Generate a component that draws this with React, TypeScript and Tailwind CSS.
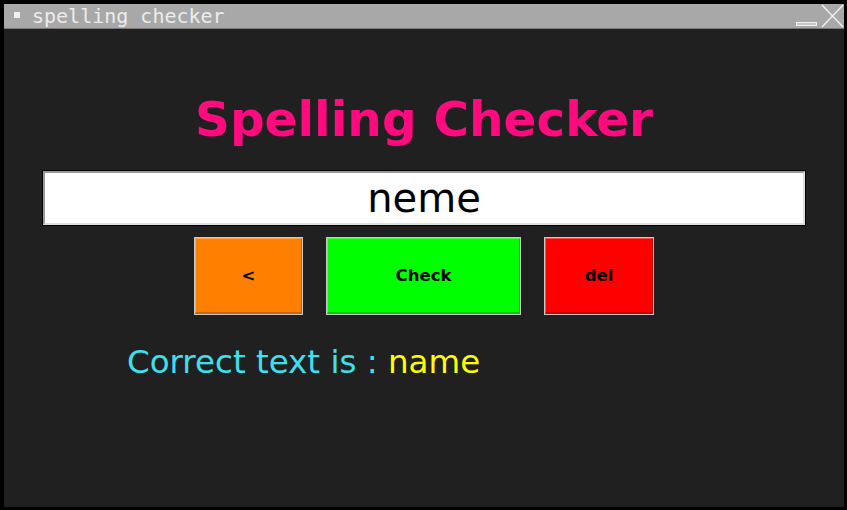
import React from "react";

const Btn = ({ label, bg, w }: { label: string; bg: string; w: string }) => (
  <button
    className={`${w} h-[78px] border border-[#c8c8c8] ${bg} flex items-center justify-center text-[16.5px] font-bold text-black`}
    style={{ fontFamily: '"DejaVu Sans", sans-serif' }}
  >
    <span className="w-full h-full flex items-center justify-center pt-[3px] border-b-2 border-r border-black/20 border-t border-l border-t-white/30 border-l-white/30">
      {label}
    </span>
  </button>
);

export default function App() {
  return (
    <div className="w-[847px] h-[510px] bg-black pl-[4px] pt-[4px] pr-[3px] pb-[3px]">
      <div className="w-full h-full flex flex-col bg-[#202020]">
        <div className="h-[25px] bg-[#a8a8a8] border-b border-[#777] flex items-center relative">
          <div className="w-[6px] h-[6px] bg-[#f0f0f0] ml-[10px] mb-[2px]" />
          <span
            className="ml-[12px] text-[20px] leading-none text-[#ececec] mb-[1px]"
            style={{ fontFamily: '"DejaVu Sans Mono", monospace' }}
          >
            spelling checker
          </span>
          <div className="absolute left-[792px] top-[18px] w-[21px] h-[4px] border border-[#f0f0f0] bg-[#c8c8c8]" />
          <svg className="absolute left-[817px] top-0" width="23" height="24" viewBox="0 0 23 24">
            <path d="M1 1 L22 23 M22 1 L1 23" stroke="#eeeeee" strokeWidth="1.5" fill="none" />
          </svg>
        </div>
        <div className="flex-1 flex flex-col items-center" style={{ fontFamily: '"DejaVu Sans", sans-serif' }}>
          <h1 className="mt-[66px] text-[48.5px] leading-none font-bold text-[#ff0a7f]">Spelling Checker</h1>
          <div className="mt-[26px] w-[764px] h-[56px] border border-black bg-white flex items-center justify-center">
            <div className="w-full h-full border-2 border-t-[#999] border-l-[#999] border-b-[#ddd] border-r-[#ddd] flex items-center justify-center text-[40px] leading-none text-black">
              neme
            </div>
          </div>
          <div className="mt-[11px] flex gap-[23px]">
            <Btn label="<" bg="bg-[#ff8000]" w="w-[109px]" />
            <Btn label="Check" bg="bg-[#00ff00]" w="w-[195px]" />
            <Btn label="del" bg="bg-[#ff0000]" w="w-[110px]" />
          </div>
          <div className="self-start ml-[123px] mt-[31px] text-[32.5px] leading-none">
            <span className="text-[#3ee0ef]">Correct text is : </span>
            <span className="text-[#ffff00]">name</span>
          </div>
        </div>
      </div>
    </div>
  );
}
